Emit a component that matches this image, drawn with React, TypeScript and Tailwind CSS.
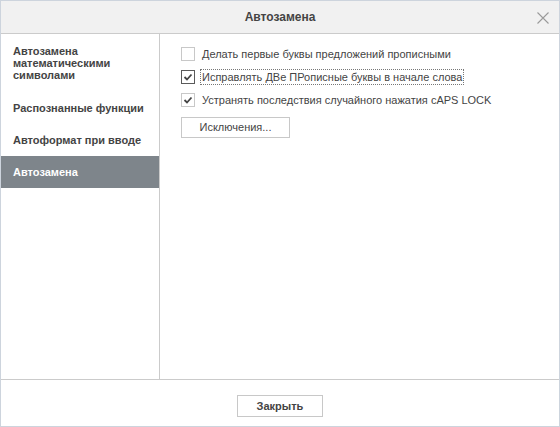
import { useState } from "react";

const menuItems = [
  "Автозамена математическими символами",
  "Распознанные функции",
  "Автоформат при вводе",
  "Автозамена",
];

const options = [
  { label: "Делать первые буквы предложений прописными", checked: false },
  { label: "Исправлять ДВе ПРописные буквы в начале слова", checked: true, focused: true },
  { label: "Устранять последствия случайного нажатия cAPS LOCK", checked: true },
];

function CheckBox({ checked, dark }: { checked: boolean; dark?: boolean }) {
  return (
    <span
      className={`flex h-[14px] w-[14px] shrink-0 items-center justify-center border bg-white ${
        dark ? "border-[#5a5a5a]" : "border-[#c8c8c8]"
      }`}
    >
      {checked && (
        <svg width="10" height="10" viewBox="0 0 10 10">
          <polyline points="1.5,5 4,7.5 8.5,2.5" fill="none" stroke="#444" strokeWidth="1.8" />
        </svg>
      )}
    </span>
  );
}

export default function App() {
  const [active, setActive] = useState(3);

  return (
    <div
      className="flex h-[427px] w-[560px] flex-col border border-[#cdd4dd] bg-white text-[11px] text-[#444]"
      style={{ fontFamily: '"Liberation Sans", Arial, sans-serif' }}
    >
      {/* Header */}
      <div className="relative flex h-[33px] shrink-0 items-center justify-center border-b border-[#cbcbcb] bg-[#f1f1f1]">
        <span className="text-[12px] font-bold text-[#444]">Автозамена</span>
        <button className="absolute right-[10px] top-[10px] flex h-[13px] w-[13px] items-center justify-center">
          <svg width="12" height="12" viewBox="0 0 12 12">
            <path d="M0.5 0.5 L11.5 11.5 M11.5 0.5 L0.5 11.5" stroke="#9a9a9a" strokeWidth="1.1" />
          </svg>
        </button>
      </div>

      {/* Body */}
      <div className="flex min-h-0 flex-1">
        <div className="w-[159px] shrink-0 border-r border-[#cbcbcb]">
          {menuItems.map((item, i) => (
            <div
              key={item}
              onClick={() => setActive(i)}
              className={`cursor-pointer px-[12px] font-bold leading-[12px] ${
                i === 0 ? "py-[11px]" : "flex h-[32px] items-center"
              } ${i === active ? "bg-[#7e858b] text-white" : "text-[#444]"}`}
            >
              {i === 0 ? (
                <>
                  Автозамена
                  <br />
                  математическими
                  <br />
                  символами
                </>
              ) : (
                item
              )}
            </div>
          ))}
        </div>

        <div className="flex-1 pl-[21px] pt-[12px]">
          <div className="flex flex-col gap-[7px]">
            {options.map((o) => (
              <label key={o.label} className="flex h-[16px] items-center gap-[6px]">
                <CheckBox checked={o.checked} dark={o.focused} />
                <span
                  className={`px-[1px] leading-[14px] ${
                    o.focused ? "outline-1 outline-dotted outline-[#777]" : ""
                  }`}
                >
                  {o.label}
                </span>
              </label>
            ))}
          </div>
          <button className="mt-[9px] h-[21px] w-[109px] border border-[#c8c8c8] bg-white text-[11px] text-[#444]">
            Исключения...
          </button>
        </div>
      </div>

      {/* Footer */}
      <div className="flex h-[47px] shrink-0 justify-center border-t border-[#cbcbcb] pt-[15px]">
        <button className="h-[22px] w-[86px] border border-[#c8c8c8] bg-white text-[11px] font-bold text-[#444]">
          Закрыть
        </button>
      </div>
    </div>
  );
}
